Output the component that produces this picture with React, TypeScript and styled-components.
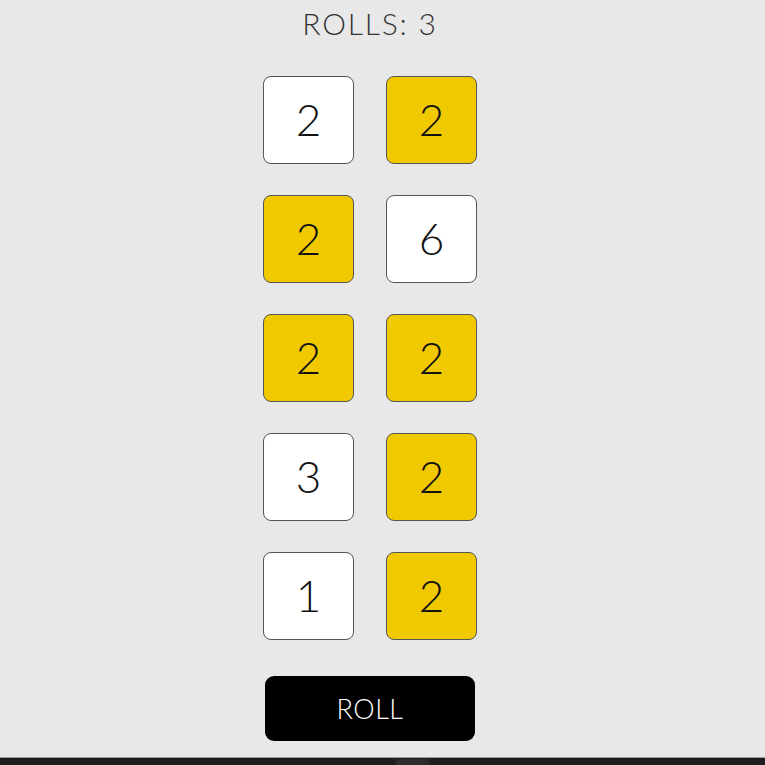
import React from "react";
import styled, { createGlobalStyle } from "styled-components";

const Global = createGlobalStyle`
  html, body { margin: 0; padding: 0; background: #e8e8e8; }
  body { font-family: Lato, "Noto Sans", sans-serif; overflow: hidden; }
`;

const Page = styled.div`
  width: 765px;
  height: 765px;
  display: flex;
  flex-direction: column;
`;

const Main = styled.main`
  width: 740px;
  flex: 1;
  display: flex;
  flex-direction: column;
  align-items: center;
`;

const Title = styled.h1`
  margin: 5px 0 0;
  font-size: 30px;
  line-height: 36px;
  font-weight: 300;
  color: #333;
  letter-spacing: 1.8px;
`;

const Grid = styled.div`
  margin-top: 35px;
  display: grid;
  grid-template-columns: 91px 91px;
  column-gap: 32px;
  row-gap: 31px;
`;

const Die = styled.div<{ $held: boolean }>`
  width: 91px;
  height: 88px;
  box-sizing: border-box;
  border: 1px solid #555;
  border-radius: 8px;
  background: ${(p) => (p.$held ? "#f1c900" : "#ffffff")};
  display: flex;
  align-items: center;
  justify-content: center;
  padding-bottom: 3px;
  font-size: 44px;
  font-weight: 300;
  color: #111;
`;

const RollButton = styled.button`
  margin-top: 36px;
  width: 210px;
  height: 65px;
  border: none;
  border-radius: 9px;
  background: #000;
  color: #fff;
  font-family: Lato, "Noto Sans", sans-serif;
  font-size: 27px;
  font-weight: 300;
  letter-spacing: 0.5px;
  cursor: pointer;
`;

const Strip = styled.div`
  height: 8px;
  background: #1e1e1e;
  border-top: 1px solid #9a9a9a;
  box-sizing: border-box;
  display: flex;
  justify-content: center;
`;

const StripThumb = styled.div`
  margin-left: 60px;
  margin-top: 1px;
  width: 35px;
  height: 10px;
  border-radius: 5px;
  background: #2c2c2c;
`;

const dice: { v: number; held: boolean }[] = [
  { v: 2, held: false },
  { v: 2, held: true },
  { v: 2, held: true },
  { v: 6, held: false },
  { v: 2, held: true },
  { v: 2, held: true },
  { v: 3, held: false },
  { v: 2, held: true },
  { v: 1, held: false },
  { v: 2, held: true },
];

export default function App() {
  return (
    <Page>
      <Global />
      <Main>
        <Title>ROLLS: 3</Title>
        <Grid>
          {dice.map((d, i) => (
            <Die key={i} $held={d.held}>
              {d.v}
            </Die>
          ))}
        </Grid>
        <RollButton>ROLL</RollButton>
      </Main>
      <Strip>
        <StripThumb />
      </Strip>
    </Page>
  );
}
